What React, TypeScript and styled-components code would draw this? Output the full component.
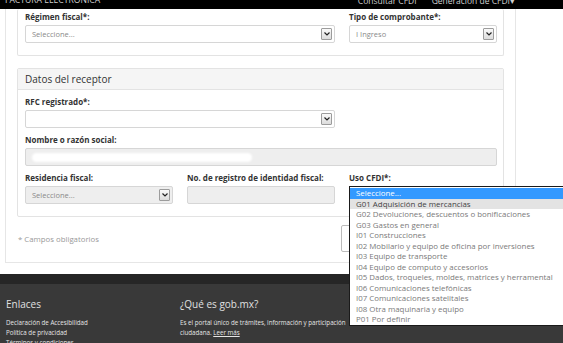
import React from "react";
import styled, { createGlobalStyle } from "styled-components";

const usoOptions = [
  "Seleccione...",
  "G01 Adquisición de mercancias",
  "G02 Devoluciones, descuentos o bonificaciones",
  "G03 Gastos en general",
  "I01 Construcciones",
  "I02 Mobilario y equipo de oficina por inversiones",
  "I03 Equipo de transporte",
  "I04 Equipo de computo y accesorios",
  "I05 Dados, troqueles, moldes, matrices y herramental",
  "I06 Comunicaciones telefónicas",
  "I07 Comunicaciones satelitales",
  "I08 Otra maquinaria y equipo",
  "P01 Por definir",
];

const Arrow = () => (
  <ArrowBox>
    <svg width="6" height="4" viewBox="0 0 6 4">
      <path d="M0.5 0.5 L3 3 L5.5 0.5" fill="none" stroke="#222" strokeWidth="1.2" />
    </svg>
  </ArrowBox>
);

const App = () => {
  return (
    <>
      <GlobalStyle />
      <TopBar>
        <Brand>FACTURA ELECTRÓNICA</Brand>
        <Nav>
          <span>Consultar CFDI</span>
          <span>Generación de CFDI▾</span>
        </Nav>
      </TopBar>
      <Page>
        <Outer>
          <Panel cut>
            <FormGrid first>
              <Field span={2}>
                <Label>Régimen fiscal*:</Label>
                <SelectBox>
                  <span>Seleccione...</span>
                  <Arrow />
                </SelectBox>
              </Field>
              <Field>
                <Label>Tipo de comprobante*:</Label>
                <SelectBox>
                  <span>I Ingreso</span>
                  <Arrow />
                </SelectBox>
              </Field>
            </FormGrid>
          </Panel>

          <Panel>
            <PanelHead>Datos del receptor</PanelHead>
            <FormGrid>
              <Field span={2}>
                <Label>RFC registrado*:</Label>
                <SelectBox>
                  <span />
                  <Arrow />
                </SelectBox>
              </Field>
              <div />
              <Field span={3}>
                <Label>Nombre o razón social:</Label>
                <SelectBox disabled>
                  <Redacted />
                </SelectBox>
              </Field>
              <Field>
                <Label>Residencia fiscal:</Label>
                <SelectBox disabled>
                  <span>Seleccione...</span>
                  <Arrow />
                </SelectBox>
              </Field>
              <Field>
                <Label>No. de registro de identidad fiscal:</Label>
                <SelectBox disabled />
              </Field>
              <Field>
                <Label>Uso CFDI*:</Label>
                <Anchor>
                  <SelectBox />
                  <Menu>
                    {usoOptions.map((o, i) => (
                      <Option key={o} state={i === 0 ? "selected" : i === 1 ? "hover" : "normal"}>
                        {o}
                      </Option>
                    ))}
                  </Menu>
                </Anchor>
              </Field>
            </FormGrid>
          </Panel>

          <Actions>
            <Note>* Campos obligatorios</Note>
            <ActionButton>Continuar</ActionButton>
          </Actions>
        </Outer>
      </Page>
      <Footer>
        <FooterGrid>
          <div>
            <FooterTitle>Enlaces</FooterTitle>
            <FooterText>Declaración de Accesibilidad</FooterText>
            <FooterText>Política de privacidad</FooterText>
            <FooterText>Términos y condiciones</FooterText>
          </div>
          <div>
            <FooterTitle>¿Qué es gob.mx?</FooterTitle>
            <FooterText>
              Es el portal único de trámites, información y participación
              <br />
              ciudadana. <u>Leer más</u>
            </FooterText>
          </div>
        </FooterGrid>
      </Footer>
    </>
  );
};

export default App;

const GlobalStyle = createGlobalStyle`
  html, body {
    margin: 0;
    padding: 0;
    background: #fff;
    overflow: hidden;
    font-family: "Open Sans", "Noto Sans", sans-serif;
    color: #333;
  }
`;

const TopBar = styled.div`
  display: flex;
  justify-content: space-between;
  height: 9px;
  background: #000;
  color: #cfcfcf;
  overflow: hidden;
  padding: 0 48px 0 5px;
`;

const Brand = styled.span`
  font-size: 8.6px;
  line-height: 10px;
  margin-top: -5px;
  white-space: nowrap;
`;

const Nav = styled.div`
  display: flex;
  gap: 15px;
  font-size: 8.5px;
  line-height: 8px;
  margin-top: -3px;
  white-space: nowrap;
`;

const Page = styled.div`
  padding: 0 0 11px 5px;
  width: 511px;
`;

const Outer = styled.div`
  border: 1px solid #e6e6e6;
  border-top: none;
  padding: 0 11px;
`;

const Panel = styled.div<{ cut?: boolean }>`
  border: 1px solid #e3e3e3;
  border-top: ${({ cut }) => (cut ? "none" : "1px solid #e3e3e3")};
  border-radius: 2px;
  margin-bottom: 12px;
`;

const PanelHead = styled.div`
  height: 20px;
  line-height: 20px;
  background: #f5f5f5;
  border-bottom: 1px solid #e3e3e3;
  padding-left: 7px;
  font-size: 10px;
  color: #333;
`;

const FormGrid = styled.div<{ first?: boolean }>`
  display: grid;
  grid-template-columns: repeat(3, 148px);
  column-gap: 14px;
  row-gap: 6px;
  padding: ${({ first }) => (first ? "2px" : "6px")} 6px 12px 7px;
`;

const Field = styled.div<{ span?: number }>`
  grid-column: span ${({ span }) => span || 1};
  display: flex;
  flex-direction: column;
  gap: 2px;
`;

const Label = styled.label`
  font-size: 8px;
  line-height: 12px;
  font-weight: 700;
  color: #333;
  white-space: nowrap;
`;

const SelectBox = styled.div<{ disabled?: boolean }>`
  display: flex;
  align-items: center;
  justify-content: space-between;
  height: 18px;
  box-sizing: border-box;
  border: 1px solid #d6d6d6;
  border-radius: 2px;
  background: ${({ disabled }) => (disabled ? "#eeeeee" : "#fff")};
  padding: 0 2px 0 6px;
  font-size: 7.5px;
  color: #8a8a8a;
  overflow: hidden;
`;

const ArrowBox = styled.span`
  display: flex;
  align-items: center;
  justify-content: center;
  width: 9px;
  height: 10px;
  border: 1px solid #9c9c9c;
  border-radius: 1px;
  background: linear-gradient(#fafafa, #dcdcdc);
`;

const Redacted = styled.span`
  width: 220px;
  height: 9px;
  background: #fff;
  border-radius: 5px;
  filter: blur(1px);
`;

const Anchor = styled.div`
  position: relative;
`;

const Menu = styled.ul`
  position: absolute;
  top: 0;
  left: 0;
  width: 230px;
  margin: 0;
  padding: 1px 0 0;
  list-style: none;
  background: #fff;
  border: 1px solid #1a1a1a;
  z-index: 5;
`;

const Option = styled.li<{ state: "selected" | "hover" | "normal" }>`
  height: 10.5px;
  line-height: 10.5px;
  padding-left: 6px;
  font-size: 7.9px;
  white-space: nowrap;
  background: ${({ state }) =>
    state === "selected" ? "#3399ff" : state === "hover" ? "#e3e3e3" : "transparent"};
  color: ${({ state }) =>
    state === "selected" ? "#fff" : state === "hover" ? "#444" : "#7a7a7a"};
`;

const Actions = styled.div`
  display: flex;
  align-items: center;
  justify-content: space-between;
  padding: 8px 0 10px 1px;
  margin-top: -12px;
`;

const Note = styled.span`
  font-size: 7.8px;
  color: #999;
`;

const ActionButton = styled.button`
  width: 160px;
  height: 27px;
  margin-right: 3px;
  border: 1px solid #bbb;
  border-radius: 2px;
  background: #fff;
  font-family: inherit;
  font-size: 8px;
  color: #555;
`;

const Footer = styled.div`
  border-top: 10px solid #262626;
  background: #393939;
  height: 80px;
  padding: 13px 6px 0;
`;

const FooterGrid = styled.div`
  display: grid;
  grid-template-columns: 174px 200px;
`;

const FooterTitle = styled.div`
  font-size: 10px;
  line-height: 14px;
  color: #e0e0e0;
  margin-bottom: 7px;
`;

const FooterText = styled.div`
  font-size: 6.2px;
  line-height: 10px;
  color: #e6e6e6;
  white-space: nowrap;
`;
